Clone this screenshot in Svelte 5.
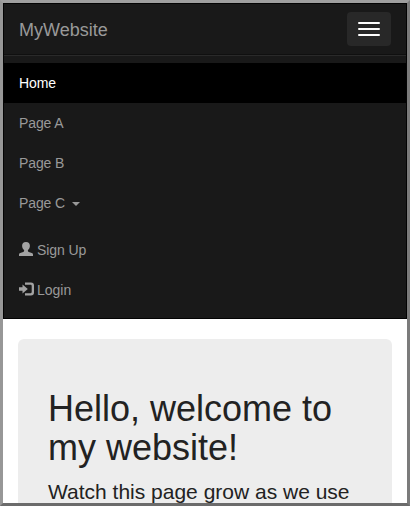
<script>
  const pages = [
    { label: 'Home', active: true },
    { label: 'Page A' },
    { label: 'Page B' },
    { label: 'Page C', dropdown: true }
  ];
</script>

<div class="frame">
  <nav class="navbar">
    <div class="header">
      <a class="brand" href="#home">MyWebsite</a>
      <button class="toggle" aria-label="Toggle navigation">
        <span></span><span></span><span></span>
      </button>
    </div>
    <div class="collapse">
      <ul>
        {#each pages as page}
          <li><a href="#page" class:active={page.active}><span class="label">{page.label}</span>{#if page.dropdown}<i class="caret"></i>{/if}</a></li>
        {/each}
      </ul>
      <ul>
        <li>
          <a href="#signup">
            <svg width="14" height="14" viewBox="0 0 14 14"><path d="M7 0C4.400 0 3.100 1.500 3.100 3.700c0 1.900.7 3.500 2 4.400v.9c0 .5-.3.800-.9 1L1.200 11.100C.4 11.400 0 11.900 0 12.600V14h14v-1.400c0-.7-.4-1.200-1.200-1.500L9.800 10c-.6-.2-.9-.5-.9-1v-.9c1.300-.9 2-2.500 2-4.400C10.900 1.500 9.600 0 7 0z" /></svg>
            <span class="label">Sign Up</span>
          </a>
        </li>
        <li>
          <a href="#login">
            <svg class="login" width="15" height="14" viewBox="0 0 15 14"><path d="M6 .5h6a3 3 0 0 1 3 3v7a3 3 0 0 1-3 3H6v-2.200h5.500c.8 0 1.200-.4 1.200-1.200V3.900c0-.8-.4-1.200-1.200-1.200H6zM0 5.200h3.500V2.600L8.800 7l-5.300 4.400V8.800H0z" /></svg>
            <span>Login</span>
          </a>
        </li>
      </ul>
    </div>
  </nav>
  <main>
    <section class="jumbotron">
      <h1>Hello, welcome to<br />my website!</h1>
      <p>Watch this page grow as we use</p>
    </section>
  </main>
</div>

<style>
  .frame {
    box-sizing: border-box;
    width: 410px;
    height: 506px;
    overflow: hidden;
    border: 3px solid;
    border-color: #9f9f9f #7b7b7b #6b6b6b #979797;
    background: #fff;
    font-family: "Liberation Sans", Arial, sans-serif;
    font-size: 14px;
    line-height: 20px;
    color: #222;
  }
  .navbar {
    box-sizing: border-box;
    height: 316px;
    background: #191919;
    border: 1px solid #030303;
  }
  .header {
    display: flex;
    justify-content: space-between;
    height: 50px;
    padding: 0 15px;
  }
  a {
    color: #999;
    text-decoration: none;
  }
  .brand {
    padding-top: 16px;
    font-size: 18px;
  }
  .toggle {
    display: flex;
    flex-direction: column;
    gap: 4px;
    width: 44px;
    height: 34px;
    margin: 8px 0;
    padding: 10px 11px;
    background: #282828;
    border: 0;
    border-radius: 4px;
  }
  .toggle span {
    height: 2px;
    flex: none;
    border-radius: 1px;
    background: #fff;
  }
  .collapse {
    border-top: 1px solid #101010;
    box-shadow: inset 0 1px 0 #2a2a2a;
    padding-top: 8px;
  }
  ul {
    list-style: none;
    margin: 0 0 7px;
    padding: 0;
  }
  li a {
    display: flex;
    align-items: center;
    height: 40px;
    padding: 0 15px;
  }
  li a.active {
    color: #fff;
    background: #000;
  }
  .label {
    letter-spacing: -0.1px;
  }
  .caret {
    margin: 2px 0 0 7px;
    border: 4px solid transparent;
    border-top-color: #999;
    border-bottom: 0;
  }
  svg {
    flex: none;
    margin: -2px 4px 0 0;
    fill: #a3a3a3;
  }
  svg.login {
    margin-right: 3px;
  }
  main {
    padding: 20px 15px 0;
  }
  .jumbotron {
    height: 260px;
    box-sizing: border-box;
    padding: 50px 30px 0;
    background: #ededed;
    border-radius: 6px;
    white-space: nowrap;
  }
  h1 {
    margin: 0 0 10px;
    font-size: 36px;
    font-weight: 400;
    line-height: 39px;
  }
  p {
    margin: 0;
    font-size: 21px;
    line-height: 30px;
  }
</style>
